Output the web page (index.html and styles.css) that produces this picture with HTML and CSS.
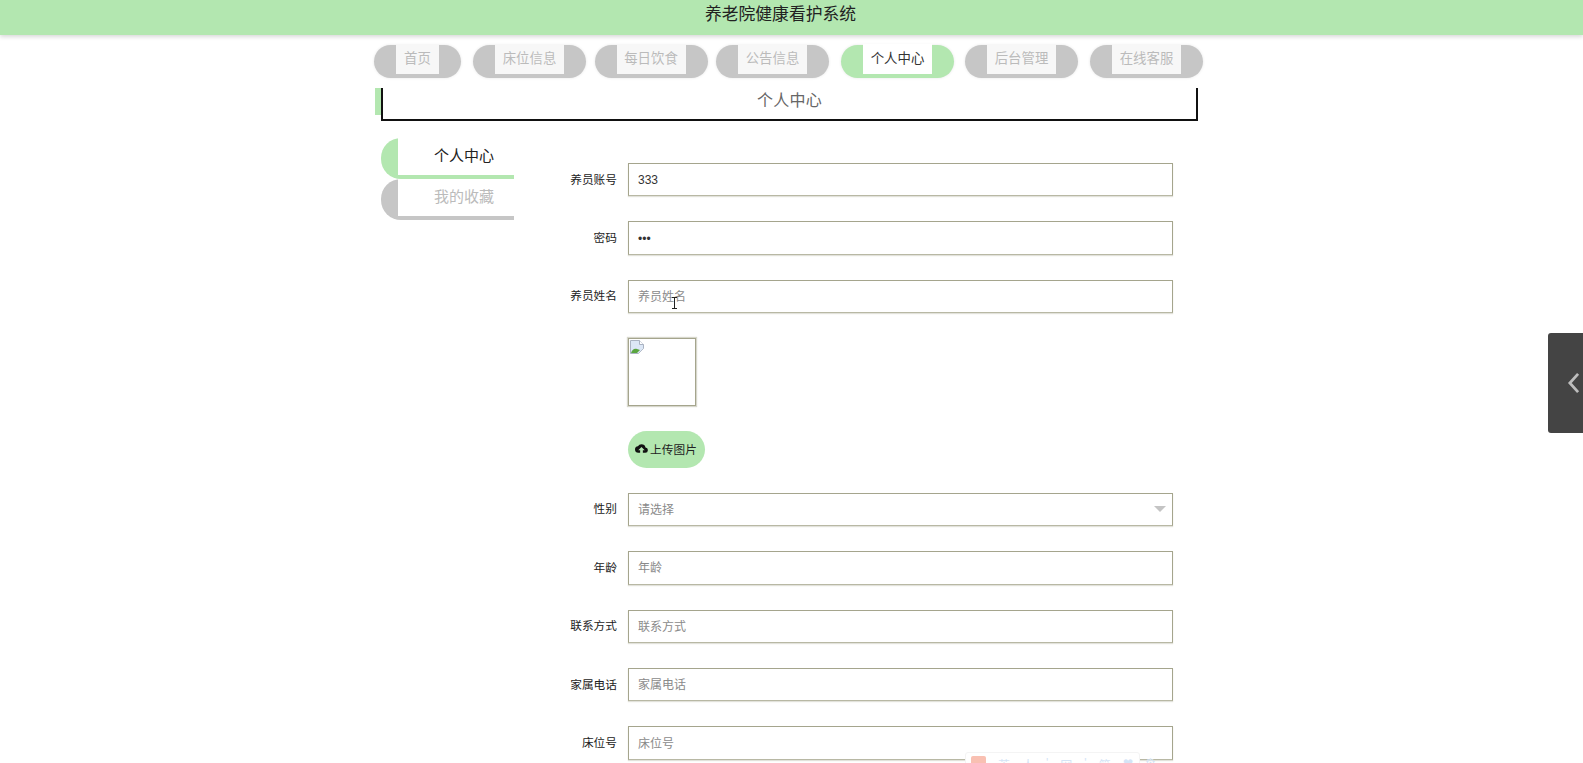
FILE: index.html
```html
<!DOCTYPE html>
<html lang="zh-CN">
<head>
<meta charset="utf-8">
<title>养老院健康看护系统</title>
<link rel="stylesheet" href="styles.css">
</head>
<body>
<header class="top-bar">养老院健康看护系统</header>
<div class="page">
  <nav class="nav">
    <a class="nav-item w-s"><span>首页</span></a>
    <a class="nav-item near"><span>床位信息</span></a>
    <a class="nav-item near"><span>每日饮食</span></a>
    <a class="nav-item"><span>公告信息</span></a>
    <a class="nav-item active"><span>个人中心</span></a>
    <a class="nav-item"><span>后台管理</span></a>
    <a class="nav-item"><span>在线客服</span></a>
  </nav>
  <div class="subtitle-wrap">
    <div class="subtitle-mark"></div>
    <div class="subtitle">个人中心</div>
  </div>
  <div class="content">
    <aside class="side">
      <div class="side-item on"><span>个人中心</span></div>
      <div class="side-item"><span>我的收藏</span></div>
    </aside>
    <form class="form">
      <div class="row"><label class="lbl">养员账号</label><input class="field" value="333"></div>
      <div class="row"><label class="lbl">密码</label><input class="field" type="password" value="333"></div>
      <div class="row"><label class="lbl">养员姓名</label><input class="field" placeholder="养员姓名"></div>
      <div class="row row-img"><span class="lbl"></span>
        <div class="img-box">
          <svg class="broken" viewBox="0 0 14 14" width="14" height="14"><path d="M.5.5h9l4 4v4l-5 5H.5z" fill="#dce7f6" stroke="#aab3c2"/><path d="M9.500.5v4h4" fill="#fff" stroke="#aab3c2"/><path d="M1 13c1-3 3-5 6-4l3 1-3 3z" fill="#5aa540"/><path d="M13.500 9 9 13.500h4.500z" fill="#fff"/></svg>
        </div>
      </div>
      <div class="row row-btn"><span class="lbl"></span>
        <button class="upload" type="button">
          <svg viewBox="0 0 24 24" width="13" height="13"><path d="M19.350 10.040A7.490 7.490 0 0 0 12 4a7.500 7.500 0 0 0-6.650 4.040A6 6 0 0 0 6 20h3.500v-5H6l6-6 6 6h-3.500v5H19a5 5 0 0 0 .35-9.960z" fill="#111"/></svg>上传图片</button>
      </div>
      <div class="row"><label class="lbl">性别</label>
        <div class="select field"><span>请选择</span><i class="caret"></i></div>
      </div>
      <div class="row"><label class="lbl">年龄</label><input class="field" placeholder="年龄"></div>
      <div class="row"><label class="lbl">联系方式</label><input class="field" placeholder="联系方式"></div>
      <div class="row"><label class="lbl">家属电话</label><input class="field" placeholder="家属电话"></div>
      <div class="row"><label class="lbl">床位号</label><input class="field" placeholder="床位号"></div>
    </form>
  </div>
</div>
<div class="side-tab"><svg viewBox="0 0 14 24" width="13" height="22"><path d="M12 2 3 12l9 10" fill="none" stroke="#bdbdbd" stroke-width="3"/></svg></div>
<svg class="cursor" viewBox="0 0 7 12" width="7" height="12"><path d="M1 .5h5M3.500.5v11M1 11.500h5" fill="none" stroke="#222" stroke-width="1"/></svg>
<div class="ime"><b class="ime-logo"></b><span>英</span><span>人</span><span>'</span><span>网</span><span>'</span><span>简</span><span>❤</span><span>⚙</span></div>
</body>
</html>
```
FILE: styles.css
```css
* { box-sizing: border-box; }
html, body { margin: 0; padding: 0; height: 763px; overflow: hidden; background: #fff; }
body { font-family: "Liberation Sans", "Noto Sans CJK SC", sans-serif; color: #333; position: relative; }
.top-bar {
  height: 35px; background: #b3e7b0; box-shadow: 0 2px 4px rgba(0,0,0,.15);
  text-align: center; font-size: 16.8px; line-height: 29px; color: #222; padding-right: 22px;
}
.page { width: 830px; margin-left: 374px; padding-top: 10px; }
.nav { display: flex; gap: 12px; height: 33px; }
.nav-item {
  display: block; height: 33px; padding: 0 22px 4px; background: #c6c6c6; border-radius: 17px;
  box-shadow: 0 0 3px rgba(0,0,0,.1); width: 113px;
}
.nav-item.w-s { width: 87px; }
.nav-item.near { margin-right: -3.5px; }
.nav-item span {
  display: block; height: 30px; margin-top: -1px; background: #f7f7f7; color: #bbb;
  font-size: 13.4px; line-height: 30px; text-align: center; white-space: nowrap;
}
.nav-item.active { background: #b3e7b0; margin-right: -1px; }
.nav-item.active span { background: #fff; color: #333; }
.subtitle-wrap { display: flex; margin-top: 10px; margin-left: 1px; }
.subtitle-mark { width: 6px; height: 27px; background: #b3e7b0; }
.subtitle {
  width: 817px; height: 33px; border: solid #111; border-width: 0 2px 2px; text-align: center;
  font-size: 16px; letter-spacing: .3px; line-height: 26px; color: #666;
}
.content { display: flex; margin-left: 7px; margin-top: 17px; }
.side { width: 133px; }
.side-item { height: 41px; padding: 0 0 4px 17px; border-radius: 20px 0 0 20px; background: #c6c6c6; color: #bbb; font-size: 15px; }
.side-item span { display: block; height: 37px; line-height: 35px; padding-left: 36px; background: #fff; }
.side-item.on { background: #b3e7b0; color: #222; }
.form { width: 659px; padding-top: 25px; }
.row { display: flex; align-items: center; height: 33.4px; margin-bottom: 25px; }
.lbl { width: 103px; margin-right: 11px; padding-bottom: 3px; text-align: right; font-size: 11.7px; color: #222; flex: none; }
.field {
  display: block; width: 545px; height: 100%; border: 1px solid #a5a58d; border-bottom-color: #b8b8a4; box-shadow: 0 1px 1px rgba(140,140,110,.25);
  background: #fff; padding: 1px 9px 0; font: 12px "Liberation Sans", "Noto Sans CJK SC", sans-serif; color: #333; outline: none;
}
.field::placeholder { color: #8a8a8a; }
.select { display: flex; align-items: center; justify-content: space-between; color: #8a8a8a; font-size: 12px; padding: 0 9px 2px; }
.caret { border: 6px solid transparent; border-top: 6px solid #c4c4c4; border-bottom: 0; margin-right: -3px; margin-top: 2px; }
.row-img { height: 68px; margin-bottom: 25px; }
.img-box { width: 68px; height: 68px; border: 1px solid #a5a58d; box-shadow: 0 0 1px 1px rgba(140,140,110,.35); padding: 1px; }
.broken { display: block; }
.row-btn { height: 37px; margin-bottom: 24.6px; }
.upload {
  display: flex; align-items: center; justify-content: center; gap: 2px; width: 77px; height: 37px; border: 0; border-radius: 19px;
  background: #b3e7b0; padding: 0 1px 2px 0; font: 11.7px "Noto Sans CJK SC", sans-serif; color: #222;
}
.side-tab {
  position: absolute; right: 0; top: 333px; width: 35px; height: 100px; background: #444; border-radius: 3px 0 0 3px;
  display: flex; align-items: center; justify-content: flex-end; padding-right: 3px;
}
.cursor { position: absolute; left: 671px; top: 297px; }
.ime {
  position: absolute; left: 965px; top: 752px; width: 175px; height: 20px; border: 1px solid #f4f4f4; border-radius: 3px;
  display: flex; gap: 12px; padding: 3px 5px; font-size: 12px; color: #d4e4f6; background: #fff;
}
.ime-logo { width: 15px; height: 15px; background: #f9c0b2; border-radius: 2px; flex: none; }
```
